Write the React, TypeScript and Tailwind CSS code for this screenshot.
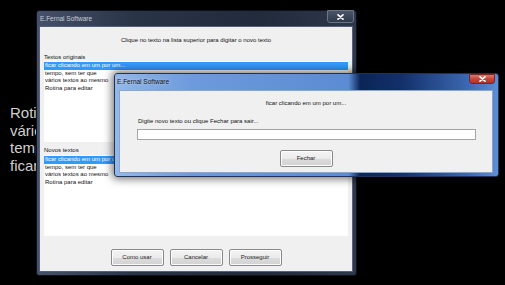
import React from "react";

const sans = "font-['Liberation_Sans',Arial,sans-serif]";

function CloseX({ className }: { className?: string }) {
  return (
    <svg width="7" height="6" viewBox="0 0 7 6" className={className}>
      <path d="M1 0.8 L6 5.2 M6 0.8 L1 5.2" stroke="white" strokeWidth="1.6" strokeLinecap="round" />
    </svg>
  );
}

function Button({ label }: { label: string }) {
  return (
    <div className="flex h-[17px] w-[53px] items-center justify-center rounded-[2px] border border-[#8a8a8a] bg-[linear-gradient(#f4f4f4_0%,#ebebeb_50%,#dcdcdc_51%,#d2d2d2_100%)] text-[6px] text-[#1a1a1a] shadow-[inset_0_0_0_1px_#fcfcfc]">
      {label}
    </div>
  );
}

function TextList({ selected, rows }: { selected: string; rows: string[] }) {
  return (
    <div className="h-[81px] bg-white pt-[1px] text-[6px] leading-[7.5px]">
      <div className="bg-[#3399ff] pl-[1px] text-white">{selected}</div>
      {rows.map((r) => (
        <div key={r} className="pl-[1px] text-[#111]">
          {r}
        </div>
      ))}
    </div>
  );
}

const rows = ["tempo, sem ter que", "vários textos ao mesmo", "Rotina para editar"];

export default function App() {
  return (
    <div className={`relative h-[285px] w-[505px] overflow-hidden bg-black ${sans}`}>
      {/* slide text behind the windows, cut off by the main window */}
      <div className="absolute left-[10px] top-[104px] w-[26px] overflow-hidden whitespace-nowrap text-[15px] leading-[17.5px] text-[#cfcfcf]">
        <div>Rotina para editar</div>
        <div>vários textos ao mesmo</div>
        <div>tempo, sem ter que</div>
        <div>ficar clicando em um por um...</div>
      </div>

      {/* main window */}
      <div className="absolute left-[36px] top-[10px] flex h-[266px] w-[321px] flex-col rounded-[3px] border border-[#0e1117] bg-[linear-gradient(90deg,#46506a,#2a3447_30%,#222b3c_70%,#2e384b)]">
        <div className="flex h-[15px] items-center pl-[3px] text-[6.5px] text-[#c9cdd5]">
          E.Fernal Software
        </div>
        <div className="absolute right-[2px] top-[-1px] flex h-[13px] w-[27px] items-center justify-center rounded-b-[3px] border border-[#6b7588] bg-[linear-gradient(#4b5568,#2f394c)]">
          <CloseX />
        </div>
        <div className="mb-[3px] ml-[2px] mr-[3px] flex flex-1 flex-col border border-[#56607a] bg-[#f0f0f0] px-[4px]">
          <div className="pt-[9px] text-center text-[6px] leading-[8px] text-[#111]">
            Clique no texto na lista superior para digitar o novo texto
          </div>
          <div className="mt-[9px] text-[6px] leading-[8px] text-[#111]">Textos originais</div>
          <TextList selected="ficar clicando em um por um..." rows={rows} />
          <div className="mt-[4px] text-[6px] leading-[8px] text-[#111]">Novos textos</div>
          <div className="mt-[1px]">
            <TextList selected="ficar clicando em um por um..." rows={rows} />
          </div>
          <div className="mt-[13px] flex justify-center gap-[6px]">
            <Button label="Como usar" />
            <Button label="Cancelar" />
            <Button label="Prosseguir" />
          </div>
        </div>
      </div>

      {/* edit dialog */}
      <div className="absolute left-[114px] top-[73px] flex h-[104px] w-[385px] flex-col rounded-[3px] border border-[#1d3458] bg-[linear-gradient(90deg,#94b8e8_0%,#6d9adc_20%,#5b8bd2_61%,#0b2556_64%,#13306a_75%,#3c68b0_92%,#5e8ed6_100%)] shadow-[0_0_8px_2px_rgba(0,0,0,0.55)]">
        <div className="flex h-[16px] items-center pl-[2px] text-[6.5px] text-[#111] [text-shadow:0_0_3px_rgba(255,255,255,0.6)]">
          E.Fernal Software
        </div>
        <div className="absolute right-[3px] top-[0px] flex h-[10px] w-[26px] items-center justify-center rounded-b-[3px] border border-[#7a2620] bg-[linear-gradient(#e0796c,#c4453a_50%,#b13328)]">
          <CloseX />
        </div>
        <div className="mb-[3px] ml-[4px] mr-[5px] flex flex-1 flex-col border border-[#8aa6cc] bg-[#f0f0f0]">
          <div className="pt-[8px] text-center text-[6px] leading-[8px] text-[#111]">
            ficar clicando em um por um...
          </div>
          <div className="mt-[10px] pl-[18px] text-[6px] leading-[8px] text-[#111]">
            Digite novo texto ou clique Fechar para sair...
          </div>
          <div className="ml-[17px] mr-[16px] mt-[4px] h-[11px] border border-[#a5a5a5] bg-white" />
          <div className="mt-[10px] flex justify-center">
            <Button label="Fechar" />
          </div>
        </div>
      </div>
    </div>
  );
}
